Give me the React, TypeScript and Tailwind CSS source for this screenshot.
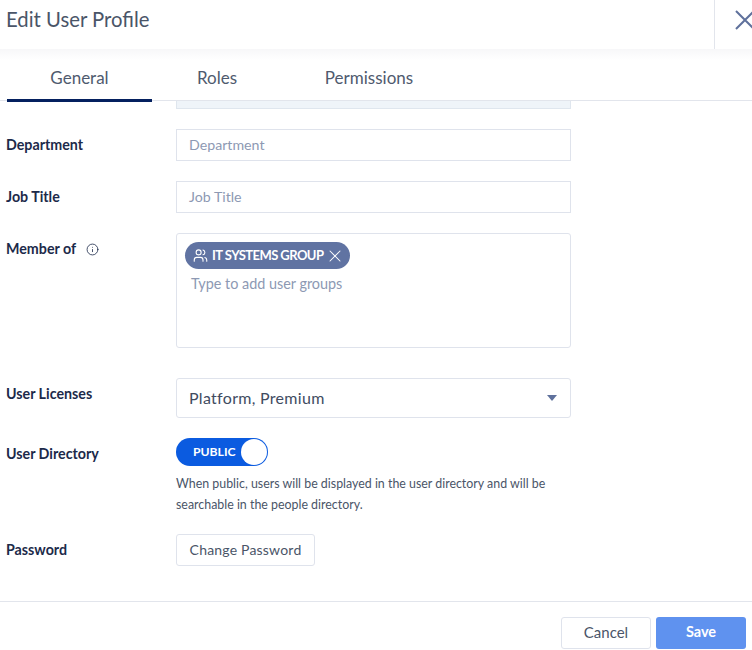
import React from 'react';
import { X, Info, Users } from 'lucide-react';

const tabs = [
  { name: 'General', width: 'w-[145px]', active: true },
  { name: 'Roles', width: 'w-[130px]', active: false },
  { name: 'Permissions', width: 'w-[174px]', active: false },
];

const Row = ({ label, className, children }: { label: React.ReactNode; className?: string; children: React.ReactNode }) => (
  <div className={`flex ${className ?? ''}`}>
    <div className="w-[176px] h-8 pl-[6px] text-[14.25px] leading-[32px] font-bold text-[#1c2a4a]">{label}</div>
    <div className="w-[395px]">{children}</div>
  </div>
);

const TextInput = ({ placeholder }: { placeholder: string }) => (
  <div className="h-8 px-3 border border-[#dfe3ec] text-[14.2px] leading-[30px] text-[#8d99b3]">{placeholder}</div>
);

const App = () => {
  return (
    <div className="w-[752px] h-[650px] overflow-hidden bg-white flex flex-col font-['Lato',sans-serif]">
      <header className="h-[49px] flex justify-between shrink-0">
        <h1 className="pl-[6px] pt-[5px] text-[20.3px] leading-[28px] font-normal text-[#4a5568]">Edit User Profile</h1>
        <div className="w-[38px] overflow-hidden border-l border-[#e2e5ec] pl-[20px] pt-[10px]">
          <svg width="20" height="20" viewBox="0 0 20 20" className="shrink-0 max-w-none text-[#5f719c]" fill="none" stroke="currentColor" strokeWidth="2">
            <path d="M1 1 L19 19 M19 1 L1 19" />
          </svg>
        </div>
      </header>

      <nav className="h-[52px] shrink-0 flex pl-[7px] border-b border-[#e2e5ec] bg-gradient-to-b from-[#f7f7f9] to-white to-[22%]">
        {tabs.map((tab) => (
          <div
            key={tab.name}
            className={`${tab.width} h-[53px] text-center text-[17px] leading-[58px] text-[#4f5a6e] ${tab.active ? 'border-b-[3px] border-[#04205f]' : ''}`}
          >
            {tab.name}
          </div>
        ))}
      </nav>

      <main className="flex-1 flex flex-col">
        <div className="ml-[176px] w-[395px] h-2 bg-[#eff4f9] border border-t-0 border-[#dfe6ee]" />

        <Row label="Department" className="mt-5">
          <TextInput placeholder="Department" />
        </Row>
        <Row label="Job Title" className="mt-5">
          <TextInput placeholder="Job Title" />
        </Row>
        <Row
          label={
            <span className="flex items-center gap-[10px]">
              Member of <Info className="w-[13px] h-[13px] text-[#1c2a4a]" strokeWidth={1.5} />
            </span>
          }
          className="mt-5"
        >
          <div className="h-[115px] rounded-[3px] border border-[#dfe3ec] pt-[8px] pl-2">
            <div className="inline-flex items-center h-[27px] w-[165px] pl-[8px] rounded-full bg-[#6073a2] text-white">
              <Users className="w-[15px] h-[15px] mr-[4px] shrink-0" strokeWidth={1.75} />
              <span className="text-[13px] font-bold tracking-[-0.55px] whitespace-nowrap">IT SYSTEMS GROUP</span>
              <X className="w-[20px] h-[20px] ml-[2px] shrink-0" strokeWidth={1.25} />
            </div>
            <div className="pl-[6px] mt-[2px] text-[14.4px] leading-[26px] text-[#8d99b3]">Type to add user groups</div>
          </div>
        </Row>
        <Row label="User Licenses" className="mt-[30px]">
          <div className="h-10 flex items-center justify-between pl-3 pr-[13px] rounded-[3px] border border-[#dfe3ec] text-[16px] leading-[38px] tracking-[0.3px] text-[#414b5f]">
            <span>Platform, Premium</span>
            <span className="w-0 h-0 border-x-[5px] border-x-transparent border-t-[6px] border-t-[#5f719c]" />
          </div>
        </Row>
        <Row label="User Directory" className="mt-5">
          <div className="w-[92px] h-7 flex items-center justify-between pl-[17px] pr-px rounded-full bg-[#0b5be0] text-white">
            <span className="text-[12.2px] font-bold">PUBLIC</span>
            <span className="w-[26px] h-[26px] rounded-full bg-white" />
          </div>
          <p className="mt-[8px] text-[12.4px] leading-[20.5px] text-[#4a5568]">
            When public, users will be displayed in the user directory and will be
            <br />
            searchable in the people directory.
          </p>
        </Row>
        <Row label="Password" className="mt-[19px]">
          <button className="h-8 w-[139px] pb-[2px] rounded-[3px] border border-[#dfe3ec] bg-white text-[14px] tracking-[0.2px] text-[#4a5568]">
            Change Password
          </button>
        </Row>
      </main>

      <footer className="h-[49px] shrink-0 border-t border-[#e2e5ec] flex justify-end items-start gap-[5px] pt-[15px] pr-[6px]">
        <button className="w-[90px] h-8 pb-[2px] rounded-[3px] border border-[#dfe3ec] bg-white text-[15px] text-[#4a5568]">Cancel</button>
        <button className="w-[90px] h-8 pb-[2px] rounded-[3px] bg-[#5f92ef] text-[14.5px] font-bold text-white">Save</button>
      </footer>
    </div>
  );
};

export default App;
